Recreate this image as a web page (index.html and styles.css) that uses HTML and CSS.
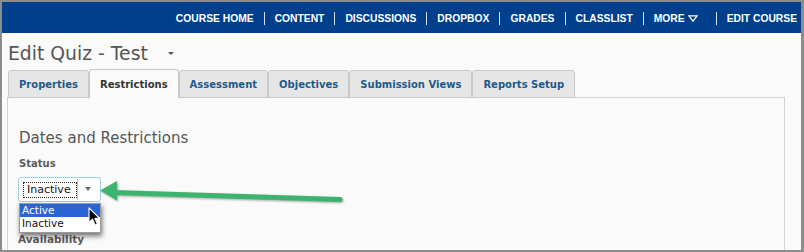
FILE: index.html
```html
<!DOCTYPE html>
<html>
<head>
    <meta charset="utf-8">
    <title>Edit Quiz - Test</title>
    <link rel="stylesheet" href="styles.css">
</head>
<body>

    <div class="page">
        <!-- Course navigation -->
        <nav class="navbar">
            <a class="nav-link">COURSE HOME</a>
            <span class="nav-sep"></span>
            <a class="nav-link">CONTENT</a>
            <span class="nav-sep"></span>
            <a class="nav-link">DISCUSSIONS</a>
            <span class="nav-sep"></span>
            <a class="nav-link">DROPBOX</a>
            <span class="nav-sep"></span>
            <a class="nav-link">GRADES</a>
            <span class="nav-sep"></span>
            <a class="nav-link">CLASSLIST</a>
            <span class="nav-sep"></span>
            <a class="nav-link nav-more">MORE
                <svg width="10" height="7" viewBox="0 0 10 7"><path d="M0.8 0.8 H9.2 L5 6.2 Z" fill="none" stroke="#fff" stroke-width="1.2"/></svg>
            </a>
            <span class="nav-sep"></span>
            <a class="nav-link nav-last">EDIT COURSE</a>
        </nav>

        <!-- Page title -->
        <div class="title-row">
            <h1 class="page-title">Edit Quiz - Test</h1>
            <span class="title-caret"></span>
        </div>

        <!-- Tabs -->
        <div class="tabs">
            <div class="tab">Properties</div>
            <div class="tab active">Restrictions</div>
            <div class="tab">Assessment</div>
            <div class="tab">Objectives</div>
            <div class="tab">Submission Views</div>
            <div class="tab">Reports Setup</div>
        </div>

        <div class="panel">
            <h2 class="section-title">Dates and Restrictions</h2>
            <div class="field-label">Status</div>
            <div class="select-wrap">
                <div class="select">
                    <span class="select-value"><span class="focus-ring">Inactive</span></span>
                    <span class="select-arrow"></span>
                </div>
                <ul class="select-list">
                    <li class="option selected">Active</li>
                    <li class="option">Inactive</li>
                </ul>
            </div>
            <div class="field-label availability">Availability</div>
        </div>

        <!-- Green callout arrow -->
        <svg class="callout" width="256" height="34" viewBox="95 176 256 34">
            <g class="callout-shape">
                <line x1="113" y1="192.6" x2="340" y2="199.6" stroke="#3db46e" stroke-width="5" stroke-linecap="round"/>
                <polygon points="100,190.5 117,181 117,200.5" fill="#3db46e"/>
            </g>
        </svg>

        <!-- Mouse pointer -->
        <svg class="pointer" width="13" height="20" viewBox="0 0 13 20">
            <path d="M1 1 L1 15.5 L4.6 12.2 L7.2 18.2 L9.4 17.2 L6.9 11.4 L11.6 11.4 Z" fill="#000" stroke="#fff" stroke-width="1.1" stroke-linejoin="round"/>
        </svg>
    </div>

</body>
</html>
```

FILE: styles.css
```css
* {
    margin: 0;
    padding: 0;
    box-sizing: border-box;
}

body {
    background-color: #8c8c8c;
    padding: 2px 3px 2px 2px;
    height: 252px;
    overflow: hidden;
    font-family: "DejaVu Sans", Verdana, sans-serif;
}

.page {
    position: relative;
    height: 248px;
    overflow: hidden;
    background-color: #fafafa;
}

/* Top navigation bar */
.navbar {
    height: 31px;
    background-color: #003f8b;
    display: flex;
    justify-content: flex-end;
    align-items: center;
    padding-right: 4px;
    padding-top: 1px;
}

.nav-link {
    font-family: "Liberation Sans", Arial, sans-serif;
    font-weight: bold;
    font-size: 10.3px;
    color: #fff;
    padding: 0 10px;
    display: flex;
    align-items: center;
    gap: 3px;
}

.nav-more {
    padding-right: 18px;
}

.nav-last {
    padding-right: 0;
}

.nav-sep {
    width: 1px;
    height: 13px;
    background-color: #d6dff0;
}

/* Title */
.title-row {
    height: 36px;
    padding: 10px 0 0 6px;
    display: flex;
    align-items: flex-start;
}

.page-title {
    font-weight: normal;
    font-size: 18.8px;
    line-height: 22px;
    color: #555;
}

.title-caret {
    width: 0;
    height: 0;
    border-left: 3.5px solid transparent;
    border-right: 3.5px solid transparent;
    border-top: 3.5px solid #555;
    margin: 9px 0 0 20px;
}

/* Tabs */
.tabs {
    display: flex;
    align-items: flex-end;
    padding-left: 6px;
    position: relative;
    z-index: 1;
    margin-bottom: -1px;
}

.tab {
    font-size: 10px;
    font-weight: bold;
    line-height: 14px;
    color: #1b5a8a;
    background-color: #e6e6e6;
    border: 1px solid #c9c9c9;
    border-radius: 3px 3px 0 0;
    padding: 7px 10px 5px 10px;
}

.tab.active {
    color: #333;
    background-color: #fafafa;
    border-bottom-color: #fafafa;
    padding: 8px 10px 6px 10px;
    margin-bottom: -1px;
}

/* Content panel */
.panel {
    margin: 0 16px 0 5px;
    height: 160px;
    border: 1px solid #d3d3d3;
    border-bottom: none;
    background-color: #fafafa;
    padding: 31px 0 0 11px;
}

.section-title {
    font-weight: normal;
    font-size: 15px;
    line-height: 18px;
    color: #555;
    margin-bottom: 10px;
}

.field-label {
    font-size: 10px;
    font-weight: bold;
    line-height: 14px;
    color: #5a5a5a;
}

.availability {
    font-size: 10.5px;
    margin-top: 30px;
    margin-left: -1px;
}

/* Status select */
.select-wrap {
    position: relative;
    width: 83px;
    margin: 6px 0 0 -1px;
}

.select {
    height: 25px;
    border: 1px solid #9fd0e8;
    border-radius: 3px;
    background-color: #fff;
    display: flex;
    align-items: stretch;
}

.select-value {
    padding: 3px 0 0 4px;
    width: 59px;
    border-right: 1px solid #c4c4c4;
    margin: 1px 0;
}

.focus-ring {
    display: block;
    border: 1px dotted #222;
    font-size: 11px;
    line-height: 14px;
    color: #111;
    padding: 0 3px 0 3px;
    width: 54px;
}

.select-arrow {
    width: 0;
    height: 0;
    border-left: 3.5px solid transparent;
    border-right: 3.5px solid transparent;
    border-top: 4px solid #6a6a6a;
    margin: 9px 0 0 7px;
}

.select-list {
    list-style: none;
    position: absolute;
    left: 1px;
    top: 26px;
    width: 82px;
    background-color: #fff;
    border: 1px solid #9a9a9a;
    box-shadow: 1px 3px 5px rgba(0, 0, 0, 0.55);
    padding: 0 0 2px 0;
}

.option {
    font-size: 10.5px;
    line-height: 13px;
    padding-left: 2px;
    color: #111;
}

.option.selected {
    background-color: #2a64d4;
    color: #fff;
}

/* Overlays */
.callout {
    position: absolute;
    left: 93px;
    top: 174px;
}

.callout-shape {
    filter: drop-shadow(1px 1.5px 1.2px rgba(0, 0, 0, 0.35));
}

.pointer {
    position: absolute;
    left: 86px;
    top: 205px;
}
```
